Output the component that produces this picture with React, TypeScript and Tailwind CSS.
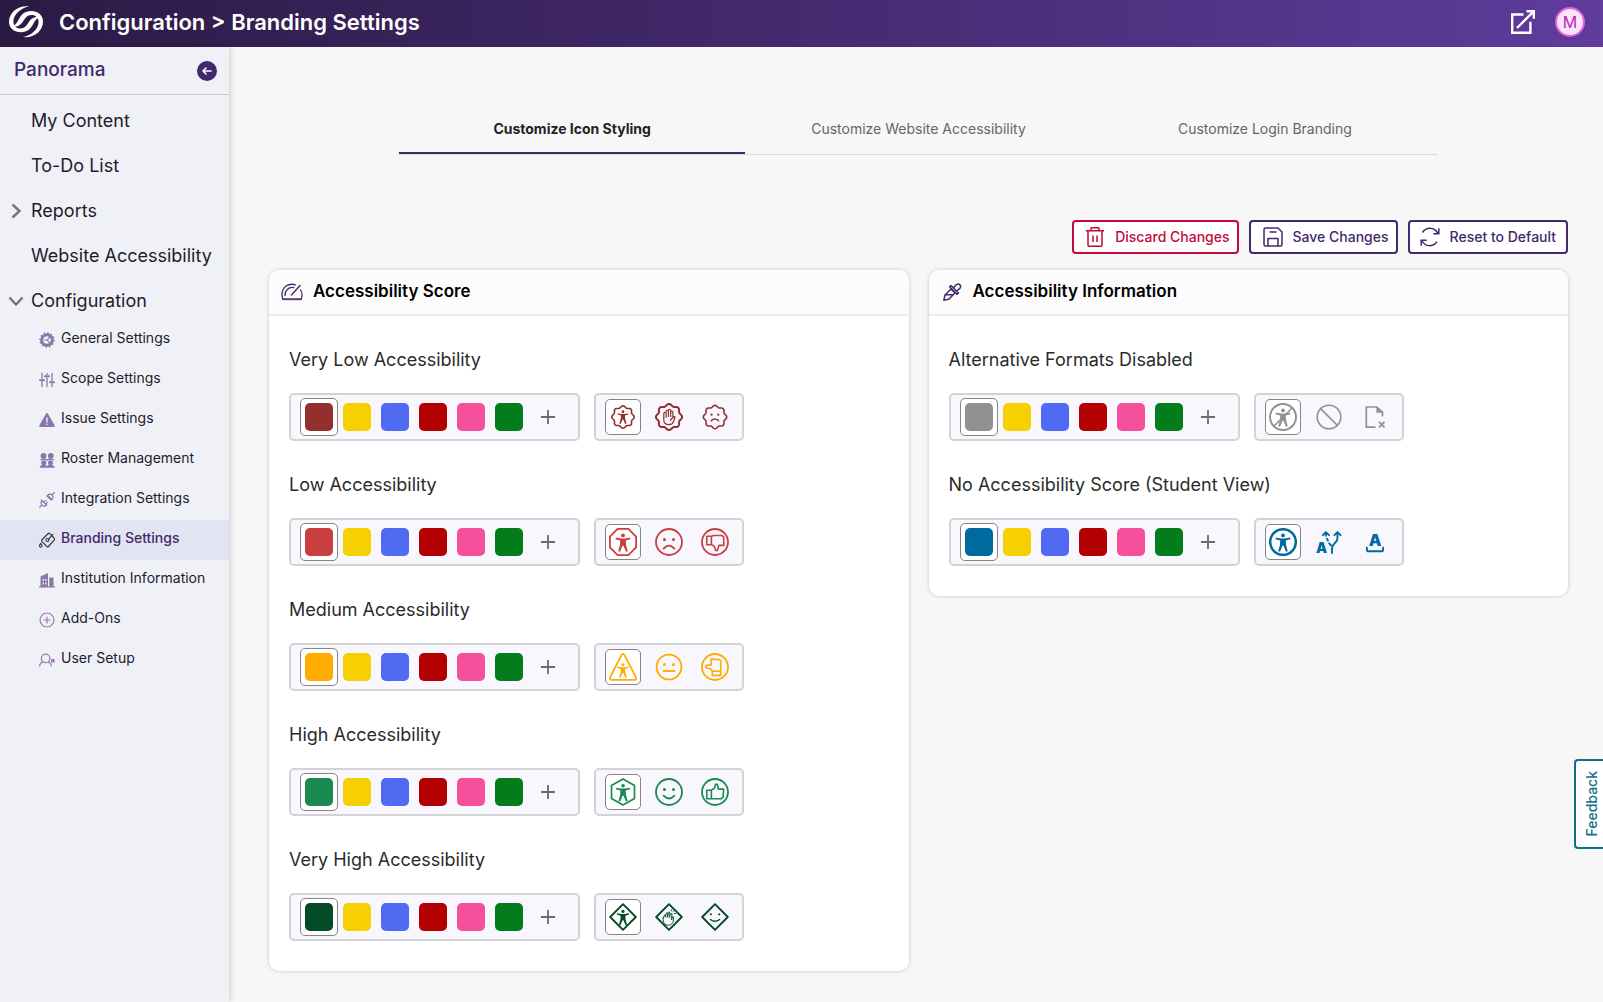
import { useState, type ReactNode } from 'react';

interface IconProps {
    className?: string;
}

type Glyph = () => ReactNode;

interface Level {
    title: string;
    color: string;
    swatch: string;
    text: string;
    icons: { name: string; glyph: Glyph }[];
}

function scallop(radius: number, depth: number) {
    const points: string[] = [];
    for (let i = 0; i < 96; i++) {
        const angle = (i / 96) * Math.PI * 2;
        const r = radius + depth * Math.cos(angle * 8);
        points.push(`${(14 + r * Math.sin(angle)).toFixed(2)} ${(14 - r * Math.cos(angle)).toFixed(2)}`);
    }
    return `M${points.join('L')}Z`;
}

function Drawing({ children }: { children: ReactNode }) {
    return (
        <svg viewBox="0 0 28 28" className="size-7" fill="none" stroke="currentColor" strokeWidth="1.8" strokeLinejoin="round" strokeLinecap="round" aria-hidden="true">
            {children}
        </svg>
    );
}

function Person({ transform }: { transform?: string }) {
    return (
        <g transform={transform} fill="currentColor" stroke="none">
            <circle cx="14" cy="7.4" r="1.9" />
            <path d="M6.9 9.6 12 10.400h4l5.100-.8.3 1.600-4.600 1.300.2 4.200 1.800 6.600-1.800.5-2.500-6h-1l-2.500 6-1.800-.5 1.800-6.600.2-4.200-4.600-1.300z" />
        </g>
    );
}

function Eyes() {
    return (
        <g fill="currentColor" stroke="none">
            <circle cx="9.5" cy="11.5" r="1.5" />
            <circle cx="18.5" cy="11.5" r="1.5" />
        </g>
    );
}

const BadgePerson = () => (
    <Drawing>
        <path d={scallop(10.3, 0.9)} strokeWidth="1.6" />
        <Person transform="translate(3.6 3.3) scale(.74)" />
    </Drawing>
);

const BadgeHand = () => (
    <Drawing>
        <path d={scallop(12.1, 1)} strokeWidth="2" />
        <path strokeWidth="1.2" d="M8.8 17v-6.4a1.1 1.1 0 0 1 2.3 0v3.6V8.4a1.1 1.1 0 0 1 2.3 0v5V7.6a1.1 1.1 0 0 1 2.3 0v5.800V9.200a1.100 1.100 0 0 1 2.200 0v5.600l.7-.9c.6-.7 1.700-.3 1.400.6l-1.600 4.300c-.7 1.900-2.100 2.900-4.200 2.900-3.200 0-5.400-1.900-5.400-4.700zM17.900 14.800c-1.400.3-2.200 1.300-2.300 2.700" />
    </Drawing>
);

const BadgeFrown = () => (
    <Drawing>
        <path d={scallop(10.8, 0.9)} strokeWidth="1.6" />
        <g transform="translate(3.4 3) scale(.75)">
            <Eyes />
            <path d="M9.2 19.5q4.8-4.5 9.6 0" strokeWidth="2" />
        </g>
    </Drawing>
);

const OctagonPerson = () => (
    <Drawing>
        <path d="M8.6.9h10.8l7.7 7.7v10.8l-7.7 7.7H8.6L.9 19.4V8.6z" />
        <Person />
    </Drawing>
);

const Frown = () => (
    <Drawing>
        <circle cx="14" cy="14" r="13" />
        <Eyes />
        <path d="M8.6 20.6q5.4-5.8 10.8 0" />
    </Drawing>
);

const ThumbDown = () => (
    <Drawing>
        <circle cx="14" cy="14" r="13" />
        <path strokeWidth="1.6" d="M5.8 8.3h4.6v8.5H5.8zM10.4 8.4l2-.9h8.2l2 1.1.3 8.8h-5l-1.5 5h-1.9l-.8-3.500-3.300-2.500" />
    </Drawing>
);

const TrianglePerson = () => (
    <Drawing>
        <path d="M12.7 1.7q1.3-1.7 2.6 0l11.800 23q.5 2-1.600 2.200h-23q-2.100-.2-1.600-2.200z" />
        <Person transform="translate(2.9 6) scale(.79)" />
    </Drawing>
);

const Neutral = () => (
    <Drawing>
        <circle cx="14" cy="14" r="12.400" />
        <Eyes />
        <path d="M8.500 18h11" />
    </Drawing>
);

const ThumbSide = () => (
    <Drawing>
        <circle cx="14" cy="14" r="13" />
        <path strokeWidth="1.6" d="M11.3 18.3h8.4v4.1h-8.4zM11.4 18.2l-1.5-2.1-4.4-1.2q-1.6-1.5 0-2.6l4.6-.4V6.1l8.300.5 1.300 1.200v10.400" />
    </Drawing>
);

const HexagonPerson = () => (
    <Drawing>
        <path d="M14 1 25.500 7.600v12.800L14 27 2.500 20.400V7.600z" strokeWidth="1.700" />
        <Person transform="translate(.6 .6) scale(.96)" />
    </Drawing>
);

const Smile = () => (
    <Drawing>
        <circle cx="14" cy="14" r="13" />
        <Eyes />
        <path d="M8.6 17.6q5.4 5.8 10.8 0" />
    </Drawing>
);

const ThumbUp = () => (
    <Drawing>
        <circle cx="14" cy="14" r="13" />
        <path strokeWidth="1.6" d="M5.8 12.2h4.6v8.5H5.8zM10.4 12.2l3.3-2.4.8-3.4h1.9l.8 3.4v1.3h5.4l-.5 8.3-1.600 1.300H10.400" />
    </Drawing>
);

const DiamondPerson = () => (
    <Drawing>
        <path d="M14 1.2 26.8 14 14 26.8 1.2 14z" strokeWidth="1.9" />
        <Person transform="translate(2.1 2.1) scale(.85)" />
    </Drawing>
);

const DiamondClap = () => (
    <Drawing>
        <path d="M14 1.2 26.8 14 14 26.8 1.2 14z" strokeWidth="1.9" />
        <path strokeWidth=".9" d="m8.2 15 1.5-3.3 1 .6-.6 2 1.5-4.600 1.200.4-.6 4.200 1.600-5.200 1.200.4-.9 5 2-4.100 1.100.5-1.100 4.500.7 1.600.7-3.500 1 .4c.4 3.200-.2 5.600-2.200 7.400-2.200 1.500-5.200 1.200-6.800-.7-1.200-1.500-1.400-3.400-1.300-5.600zM16.200 8l.5-1.400M18 8.600l1.400-1.200M19.200 10.500h1.500" />
    </Drawing>
);

const DiamondSmile = () => (
    <Drawing>
        <path d="M14 1.2 26.8 14 14 26.8 1.2 14z" strokeWidth="1.9" />
        <circle cx="9.8" cy="11.3" r="1.1" fill="currentColor" stroke="none" />
        <circle cx="18.2" cy="11.3" r="1.1" fill="currentColor" stroke="none" />
        <path d="M9.4 16.500q4.600 3.600 9.200 0" strokeWidth="1.400" />
    </Drawing>
);

const PersonDisabled = () => (
    <Drawing>
        <circle cx="14" cy="14" r="13" strokeWidth="2" />
        <Person />
        <path d="M5 23 23 5" strokeWidth="1.500" />
    </Drawing>
);

const Banned = () => (
    <Drawing>
        <circle cx="14" cy="14" r="11.800" strokeWidth="1.600" />
        <path d="m5.600 5.600 16.800 16.800" strokeWidth="1.600" />
    </Drawing>
);

const FileRemoved = () => (
    <Drawing>
        <path d="M13.800 24.200H5.300V4h10.600l5.600 5.400v3.400" strokeWidth="1.700" />
        <path d="M15.400 3.600v6.200h6.600z" fill="currentColor" stroke="none" />
        <path d="m18 18.800 5.500 5.500m0-5.500-5.500 5.500" strokeWidth="1.800" strokeLinecap="butt" />
    </Drawing>
);

const PersonCircle = () => (
    <Drawing>
        <circle cx="14" cy="14" r="12.800" strokeWidth="2.500" />
        <Person />
    </Drawing>
);

const Formats = () => (
    <Drawing>
        <text x="1" y="25.2" fontSize="14" fontWeight="900" fill="currentColor" stroke="none" className="font-['Inter',sans-serif]">A</text>
        <path strokeWidth="1.9" d="M17 25v-4.600q.2-3 3.100-5.600 2.600-2.200 2.400-5.300V4.900M19.400 7.200l3.100-3.100 3.100 3.100M7.800 7.200l3.100-3.100L14 7.200M10.900 5v2.700M12 10.700l.9 1.900M14.200 15.200l1.600 2.200" />
    </Drawing>
);

const UnderlinedLetter = () => (
    <Drawing>
        <text x="14" y="18" fontSize="16" fontWeight="900" textAnchor="middle" fill="currentColor" stroke="none" className="font-['Inter',sans-serif]">A</text>
        <path d="M5.900 19.600v2.100q0 1.600 1.600 1.600h13q1.600 0 1.600-1.600v-2.100" strokeWidth="1.900" />
    </Drawing>
);

const scoreLevels: Level[] = [
    {
        title: 'Very Low Accessibility', color: 'Maroon', swatch: 'bg-[#932f2f]', text: 'text-[#932f2f]',
        icons: [{ name: 'Badge person', glyph: BadgePerson }, { name: 'Badge hand', glyph: BadgeHand }, { name: 'Badge frown', glyph: BadgeFrown }],
    },
    {
        title: 'Low Accessibility', color: 'Light red', swatch: 'bg-[#c93e3f]', text: 'text-[#c93e3f]',
        icons: [{ name: 'Octagon person', glyph: OctagonPerson }, { name: 'Frown', glyph: Frown }, { name: 'Thumb down', glyph: ThumbDown }],
    },
    {
        title: 'Medium Accessibility', color: 'Orange', swatch: 'bg-[#ffab00]', text: 'text-[#ffab00]',
        icons: [{ name: 'Triangle person', glyph: TrianglePerson }, { name: 'Neutral', glyph: Neutral }, { name: 'Thumb sideways', glyph: ThumbSide }],
    },
    {
        title: 'High Accessibility', color: 'Light green', swatch: 'bg-[#1b8a50]', text: 'text-[#1b8a50]',
        icons: [{ name: 'Hexagon person', glyph: HexagonPerson }, { name: 'Smile', glyph: Smile }, { name: 'Thumb up', glyph: ThumbUp }],
    },
    {
        title: 'Very High Accessibility', color: 'Dark green', swatch: 'bg-[#044c27]', text: 'text-[#044c27]',
        icons: [{ name: 'Diamond person', glyph: DiamondPerson }, { name: 'Applause', glyph: DiamondClap }, { name: 'Diamond smile', glyph: DiamondSmile }],
    },
];

const informationLevels: Level[] = [
    {
        title: 'Alternative Formats Disabled', color: 'Gray', swatch: 'bg-[#919191]', text: 'text-[#919191]',
        icons: [{ name: 'Person disabled', glyph: PersonDisabled }, { name: 'Banned', glyph: Banned }, { name: 'File removed', glyph: FileRemoved }],
    },
    {
        title: 'No Accessibility Score (Student View)', color: 'Sea blue', swatch: 'bg-[#006a9e]', text: 'text-[#006a9e]',
        icons: [{ name: 'Person', glyph: PersonCircle }, { name: 'Formats', glyph: Formats }, { name: 'Letter', glyph: UnderlinedLetter }],
    },
];

const presets = [
    { color: 'Yellow', swatch: 'bg-[#f7d000]' },
    { color: 'Blue', swatch: 'bg-[#506af2]' },
    { color: 'Red', swatch: 'bg-[#b30000]' },
    { color: 'Pink', swatch: 'bg-[#f4509c]' },
    { color: 'Green', swatch: 'bg-[#037d1c]' },
];

function MenuIcon({ children, className = 'text-[#8a76a8]' }: IconProps & { children: ReactNode }) {
    return (
        <svg viewBox="0 0 16 16" className={`size-4 shrink-0 ${className}`} fill="none" stroke="currentColor" strokeWidth="1.2" strokeLinecap="round" strokeLinejoin="round" aria-hidden="true">
            {children}
        </svg>
    );
}

const settings = [
    {
        label: 'General Settings',
        icon: (
            <MenuIcon>
                <circle cx="8" cy="8" r="5.3" strokeWidth="3" />
                <circle cx="8" cy="8" r="7" strokeWidth="1.4" strokeDasharray="1.6 2.06" strokeLinecap="butt" />
                <path d="M8.6 8h-3M8.4 8l2-3M8.4 8l2 3" />
            </MenuIcon>
        ),
    },
    {
        label: 'Scope Settings',
        icon: (
            <MenuIcon>
                <path d="M3 1.500v5M3 10v4.500M8 1.500v1M8 6v8.500M13 1.500v7M13 12v2.500" strokeWidth="1.300" />
                <path d="M1 8.300h4M6 4.300h4M11 10.300h4" strokeWidth="2" />
            </MenuIcon>
        ),
    },
    {
        label: 'Issue Settings',
        icon: (
            <MenuIcon>
                <path d="M7 1.700q1-1.500 2 0l6.600 11.500q.6 1.600-1 1.700H1.400q-1.600-.1-1-1.700z" fill="currentColor" stroke="none" />
                <path d="M8 6v4M8 12.200v.3" stroke="#f0f1f7" strokeWidth="1.400" />
            </MenuIcon>
        ),
    },
    {
        label: 'Roster Management',
        icon: (
            <MenuIcon>
                <g fill="currentColor" stroke="none">
                    <circle cx="4.500" cy="3.800" r="2.900" />
                    <circle cx="11.800" cy="3.800" r="2.900" />
                    <path d="M.6 8q3.900-3.200 7.400-.4 3.500-2.800 7.800.4l-1 .6q-3-1.600-6.800.3-3-1.900-6.400-.3z" />
                    <circle cx="4.800" cy="10.800" r="2.500" />
                    <circle cx="11.500" cy="10.800" r="2.500" />
                    <path d="M.6 15.700q.4-3 4.200-3 2.300 0 3.300 1.200 1-1.200 3.300-1.200 3.800 0 4.300 3z" />
                </g>
            </MenuIcon>
        ),
    },
    {
        label: 'Integration Settings',
        icon: (
            <MenuIcon>
                <path d="m.7 15.300 2.200-2.200M15.300.7l-2.200 2.200M3 8.500 7.500 13q-2.500 2.200-4.500.2t0-4.700zM8.600 3.200l4.400 4.400q2.200-2.300.2-4.400t-4.600 0zM4.800 10.300l1.700-1.700M6.800 12l1.600-1.600M7.800 3.800l4.400 4.400M2.400 8l5.400 5.400" />
            </MenuIcon>
        ),
    },
    {
        label: 'Branding Settings',
        active: true,
        icon: (
            <MenuIcon className="text-[#3a3744]">
                <path d="m2.800 8 6.400-6.500q.8-.6 1.500.1l4.600 4.800q.6.8 0 1.500l-5.800 6.600q-.8.7-1.600 0L3 9.600q-.6-.8-.2-1.600zM9.600 7.200l4.200-4.800M12.200 2.800 14 4.600" />
                <circle cx="8.500" cy="8" r="1.500" />
                <path d="M1.700 11.400q1.500 2 1.300 2.800a1.300 1.300 0 0 1-2.500 0q-.2-.8 1.200-2.800z" />
            </MenuIcon>
        ),
    },
    {
        label: 'Institution Information',
        icon: (
            <MenuIcon>
                <path fillRule="evenodd" d="M0 14.500h1.500V4.500L9 1v13.500h1.300v-9h4.200v9H16v1H0zM3.600 7v2h1.300V7zm2.600 0v2h1.300V7zM3.600 10.600v2h1.300v-2zm2.600 0v2h1.300v-2z" fill="currentColor" stroke="none" />
            </MenuIcon>
        ),
    },
    {
        label: 'Add-Ons',
        icon: (
            <MenuIcon className="text-[#9d78b5]">
                <circle cx="8" cy="8" r="7" />
                <path d="M8 5v6M5 8h6" />
            </MenuIcon>
        ),
    },
    {
        label: 'User Setup',
        icon: (
            <MenuIcon className="text-[#9d78b5]">
                <circle cx="6.600" cy="6.400" r="4.300" />
                <path d="M.6 14q.3-3.300 3.200-3.900M9.400 10.100q2.600.6 3 3.900" />
                <circle cx="13.800" cy="8.800" r="1.200" strokeWidth="1.600" />
            </MenuIcon>
        ),
    },
];

const pages = [
    { label: 'My Content' },
    { label: 'To-Do List' },
    { label: 'Reports', chevron: 'right' },
    { label: 'Website Accessibility' },
    { label: 'Configuration', chevron: 'down' },
];

const tabs = ['Customize Icon Styling', 'Customize Website Accessibility', 'Customize Login Branding'];

function Header() {
    return (
        <header className="flex h-[47px] items-center bg-linear-to-r from-[#2b1a44] to-[#5f3c9d] pb-[3px] pl-2 pr-[18px] text-white">
            <svg viewBox="0 0 36 32" className="h-8 w-9" fill="currentColor" aria-hidden="true">
                <path d="M21 .4C10-.9 1 6.500 1 16c0 6.500 5.500 10.300 12 10.300 7.500 0 10.600-5.300 12.600-9 1.600-3 3.200-5 6.400-6.400-5.500-.8-9 1.700-11.300 5.400-1.900 3.200-3.900 6.200-8.200 6.200-4.100 0-7.100-2.700-7.100-7C5.400 8.500 12.400 2 21 .4z" />
                <path d="M15 31C26 32.300 35 24.900 35 15.400 35 8.900 29.500 5.100 23 5.100c-7.500 0-10.600 5.300-12.600 9-1.600 3-2.900 5-5.900 6.400 5.300.8 8.500-1.700 10.800-5.400 1.900-3.200 3.900-6.200 8.200-6.200 4.100 0 7.100 2.700 7.100 7C30.600 22.900 23.600 29.400 15 31z" />
            </svg>
            <h1 className="ml-[15px] grow text-[22px] font-semibold">Configuration &gt; Branding Settings</h1>
            <button type="button" aria-label="Open in new window">
                <svg viewBox="0 0 26 26" className="size-[26px]" fill="none" stroke="currentColor" strokeWidth="2.400" aria-hidden="true">
                    <path d="M13.500 5.500H2.200v18.200h18.200V12.800M7 19 23 3M16.500 2.200h7.300v7.600" />
                </svg>
            </button>
            <button type="button" aria-label="Account" className="ml-[19px] flex size-[30px] items-center justify-center rounded-full border-2 border-[#e25fd8] bg-[#fbe3fa] text-base text-[#c01fb8]">
                M
            </button>
        </header>
    );
}

function Sidebar() {
    return (
        <nav className="relative w-[229px] shrink-0 bg-[#f0f1f7] text-[#1f1b2e] shadow-[2px_0_5px_rgba(0,0,0,0.14)]">
            <div className="flex h-12 items-center justify-between border-b border-[#c9c6de] pl-[14px] pr-3">
                <span className="text-[19px] font-medium text-[#43296c]">Panorama</span>
                <button type="button" aria-label="Collapse menu" className="flex size-5 items-center justify-center rounded-full bg-[#43296c] text-white">
                    <svg viewBox="0 0 12 12" className="size-3" fill="none" stroke="currentColor" strokeWidth="1.600" strokeLinecap="round" strokeLinejoin="round" aria-hidden="true">
                        <path d="M10 6H2M5 3 2 6l3 3" />
                    </svg>
                </button>
            </div>
            <ul className="pt-[3px]">
                {pages.map((page) => (
                    <li key={page.label}>
                        <a href="#" className="flex h-[45px] items-center pl-2 text-lg">
                            <span className="flex w-[23px] text-[#757575]">
                                {page.chevron && (
                                    <svg viewBox="0 0 16 16" className={page.chevron === 'down' ? 'size-4 rotate-90' : 'size-4'} fill="none" stroke="currentColor" strokeWidth="2.400" aria-hidden="true">
                                        <path d="m4.500 1.500 7 6.500-7 6.500" />
                                    </svg>
                                )}
                            </span>
                            {page.label}
                        </a>
                    </li>
                ))}
            </ul>
            <ul className="-mt-[3px]">
                {settings.map((item) => (
                    <li key={item.label}>
                        <a
                            href="#"
                            className={`flex h-10 items-center gap-[6px] pl-[39px] text-sm ${item.active ? 'bg-[#e3e4f2] font-medium text-[#43296c]' : ''}`}
                        >
                            {item.icon}
                            <span className="pb-1">{item.label}</span>
                        </a>
                    </li>
                ))}
            </ul>
        </nav>
    );
}

function LevelRow({ level }: { level: Level }) {
    const [color, setColor] = useState(0);
    const [icon, setIcon] = useState(0);
    const colors = [{ color: level.color, swatch: level.swatch }, ...presets];

    return (
        <section>
            <h3 className="text-lg leading-6 text-[#2b2b2b]">{level.title}</h3>
            <div className="mt-[21px] flex gap-[14px]">
                <div className="flex h-12 w-[291px] items-center rounded-[5px] border-2 border-[#d3d3d5] bg-[#f8f7fe] pl-[9px]">
                    {colors.map((item, index) => (
                        <button
                            key={item.color}
                            type="button"
                            aria-label={item.color}
                            aria-pressed={color === index}
                            onClick={() => setColor(index)}
                            className={`flex size-[38px] items-center justify-center rounded-[5px] border ${color === index ? 'border-[#858585] bg-white' : 'border-transparent'}`}
                        >
                            <span className={`size-7 rounded-[5px] ${item.swatch}`} />
                        </button>
                    ))}
                    <button type="button" aria-label="Add color" className="flex size-[38px] items-center justify-center text-[#6b6b6f]">
                        <svg viewBox="0 0 14 14" className="ml-0.5 size-[14px]" stroke="currentColor" strokeWidth="1.800" aria-hidden="true">
                            <path d="M7 0v14M0 7h14" />
                        </svg>
                    </button>
                </div>
                <div className={`flex h-12 w-[150px] items-center gap-[10px] rounded-[5px] border-2 border-[#d3d3d5] bg-[#f8f7fe] pl-[9px] ${level.text}`}>
                    {level.icons.map((item, index) => (
                        <button
                            key={item.name}
                            type="button"
                            aria-label={item.name}
                            aria-pressed={icon === index}
                            onClick={() => setIcon(index)}
                            className={`flex size-9 items-center justify-center rounded-[5px] border ${icon === index ? 'border-[#858585] bg-white' : 'border-transparent'}`}
                        >
                            <item.glyph />
                        </button>
                    ))}
                </div>
            </div>
        </section>
    );
}

function Card({ title, icon, levels }: { title: string; icon: ReactNode; levels: Level[] }) {
    return (
        <div className="min-w-0 flex-1 overflow-hidden rounded-[10px] bg-white shadow-[0_0_4px_rgba(0,0,0,0.2)]">
            <div className="flex h-[46px] items-center gap-[10px] border-b-2 border-[#eeeeee] bg-[#fcfcfc] pl-3">
                {icon}
                <h2 className="pb-px text-[17px] font-semibold text-black">{title}</h2>
            </div>
            <div className="flex flex-col gap-8 px-5 pb-[30px] pt-8">
                {levels.map((level) => (
                    <LevelRow key={level.title} level={level} />
                ))}
            </div>
        </div>
    );
}

export default function App() {
    const [tab, setTab] = useState(tabs[0]);

    return (
        <div className="flex min-h-screen flex-col bg-[#f7f7f7] font-['Inter',sans-serif]">
            <Header />
            <div className="flex grow">
                <Sidebar />
                <main className="grow pb-[31px] pl-10 pr-[35px] pt-[58px]">
                    <div role="tablist" className="mx-auto flex w-4/5 border-b border-[#d9d9d9]">
                        {tabs.map((label) => (
                            <button
                                key={label}
                                type="button"
                                role="tab"
                                aria-selected={tab === label}
                                onClick={() => setTab(label)}
                                className={`h-[49px] flex-1 border-b-2 text-sm ${tab === label ? 'border-[#43296c] font-bold text-[#222222]' : 'border-transparent text-[#666666]'}`}
                            >
                                {label}
                            </button>
                        ))}
                    </div>
                    <div className="mt-[65px] flex justify-end gap-[10px] text-sm font-medium text-[#43296c]">
                        <button type="button" className="flex h-[34px] items-center gap-[10px] rounded border-2 border-[#c3093b] bg-white pl-[11px] pr-[7px] text-[#c3093b]">
                            <svg viewBox="0 0 20 20" className="size-5" fill="none" stroke="currentColor" strokeWidth="1.500" aria-hidden="true">
                                <path d="M1 3.700h18M3 3.700V18q0 1.300 1.300 1.300h11.400q1.300 0 1.300-1.300V3.700M6 3.700V1.600Q6 .7 7 .7h6q1 0 1 .9v2.100M8 8.500v6.500M12 8.500v6.500" />
                            </svg>
                            Discard Changes
                        </button>
                        <button type="button" className="flex h-[34px] items-center gap-[10px] rounded border-2 border-[#43296c] bg-white pl-3 pr-[7px]">
                            <svg viewBox="0 0 20 20" className="size-5" fill="none" stroke="currentColor" strokeWidth="1.500" strokeLinejoin="round" aria-hidden="true">
                                <path d="M2.500 1H15l4 4v12.500q0 1.500-1.500 1.500h-15Q1 19 1 17.500v-15Q1 1 2.500 1zM5 19v-7.500h10V19M6.500 5h7" />
                            </svg>
                            Save Changes
                        </button>
                        <button type="button" className="flex h-[34px] items-center gap-[10px] rounded border-2 border-[#43296c] bg-white px-[10px]">
                            <svg viewBox="0 0 20 20" className="size-5" fill="none" stroke="currentColor" strokeWidth="1.500" aria-hidden="true">
                                <path d="M2.500 5.500C6-.2 14.500-.2 17.800 6.300M18.800 1.300v5.500h-5.500M17 14.700c-3.500 5.500-12 5.300-15-1M1.200 18.700v-5.500h5.500" />
                            </svg>
                            Reset to Default
                        </button>
                    </div>
                    <div className="mt-4 flex items-start gap-5">
                        <Card
                            title="Accessibility Score"
                            levels={scoreLevels}
                            icon={
                                <svg viewBox="0 0 22 18" className="h-[18px] w-[22px] text-[#43296c]" fill="none" stroke="currentColor" strokeWidth="1.300" strokeLinecap="round" aria-hidden="true">
                                    <path d="M14.500 1.800C7.500-.2 1 4 1 11.500c0 2 .3 3.500 1 4.700h18c1.500-3 1.300-6.400-.4-9.200M4 12.500c0-5 3.500-8.800 8.800-7.900M10.500 12 19 2.500" />
                                    <path d="M2 16.200h18" strokeWidth="2" strokeOpacity=".6" />
                                </svg>
                            }
                        />
                        <Card
                            title="Accessibility Information"
                            levels={informationLevels}
                            icon={
                                <svg viewBox="-2 -2 22 22" className="size-[22px] text-[#43296c]" fill="none" stroke="currentColor" strokeWidth="1.500" strokeLinecap="round" strokeLinejoin="round" aria-hidden="true">
                                    <path d="M.8 17.200 2 12l6-6 4 4-6 6zM6.500 3.800 8 2.500l7.500 7.500-1.500 1.300zM10.500 4.800l2.700-3q2.200-1.500 3.700 0t0 3.500l-3.300 2.700M2.500 11.800h7.500" />
                                </svg>
                            }
                        />
                    </div>
                </main>
            </div>
            <button type="button" className="fixed right-0 top-[759px] flex h-[90px] w-[29px] items-center justify-center rounded-l border-2 border-r-0 border-[#11708b] bg-white pl-1 text-sm font-medium text-[#11708b]">
                <span className="rotate-180 [writing-mode:vertical-rl]">Feedback</span>
            </button>
        </div>
    );
}
